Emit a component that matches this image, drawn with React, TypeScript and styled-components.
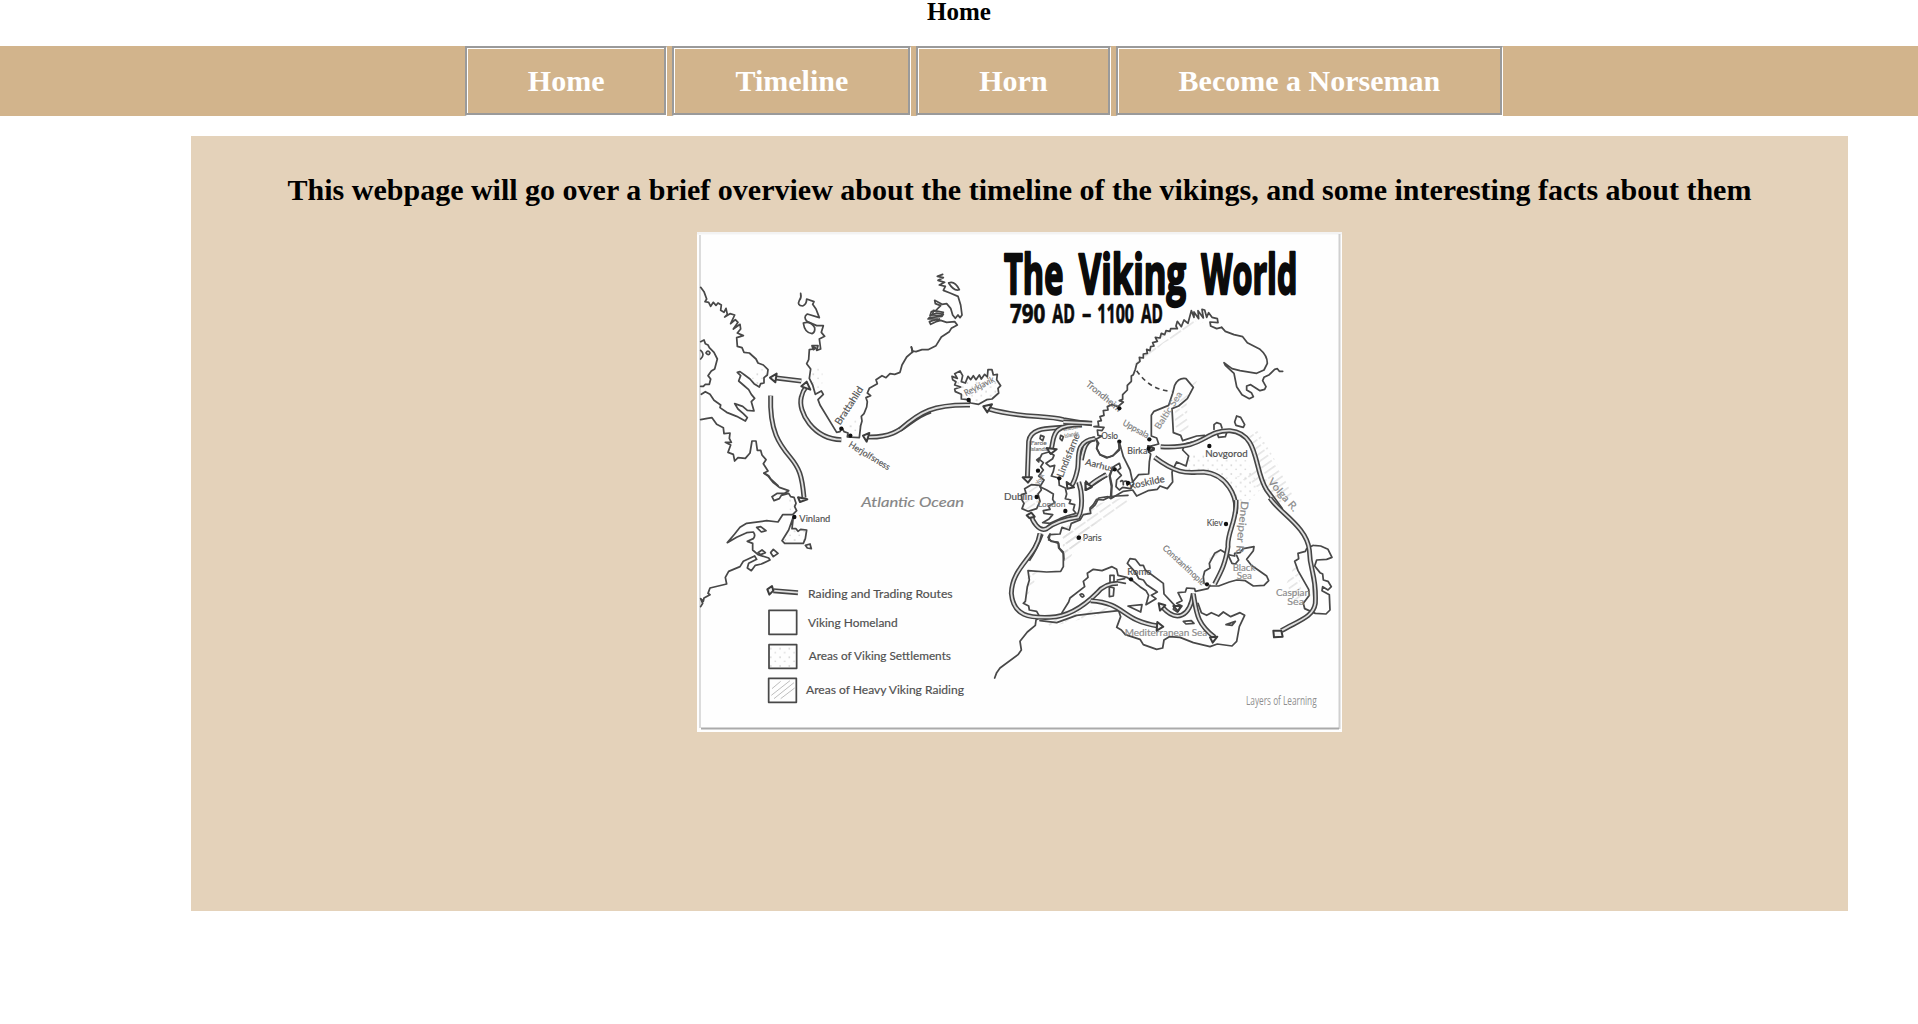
import React from 'react';
import styled, { createGlobalStyle } from 'styled-components';

const GlobalStyle = createGlobalStyle`
  body {
    margin: 0;
    background: #fff;
    font-family: "Liberation Serif", "Times New Roman", serif;
  }
`;

const Page = styled.div`
  display: flex;
  flex-direction: column;
`;

const PageTitle = styled.h1`
  margin: 0;
  height: 46px;
  box-sizing: border-box;
  font-size: 25px;
  line-height: 24px;
  text-align: center;
  color: #000;
`;

const NavBar = styled.nav`
  display: flex;
  justify-content: center;
  gap: 5px;
  padding-left: 50px;
  background: #d2b48c;
`;

const NavLink = styled.a`
  padding: 16px 62px 17px 61px;
  border-style: solid;
  border-width: 2px 1px 1px 2px;
  border-color: #9a9a9a #fff #fff #9a9a9a;
  box-shadow: inset -2px -2px 0 #9a9a9a, inset 1px 1px 0 #fff;
  color: #fff;
  font-size: 30px;
  font-weight: bold;
  line-height: 34px;
  text-decoration: none;
  white-space: nowrap;
`;

const Panel = styled.main`
  display: flex;
  flex-direction: column;
  align-items: center;
  box-sizing: border-box;
  width: 1657px;
  height: 775px;
  margin: 20px 0 0 191px;
  padding-top: 37px;
  background: #e4d2ba;
`;

const Intro = styled.h2`
  margin: 0 0 25px;
  font-size: 30px;
  line-height: 34px;
  color: #000;
  white-space: nowrap;
`;

const MapImage = styled.svg`
  display: block;
  width: 645px;
  height: 500px;
  background: #fefefe;
`;

const Coast = styled.path<{ $width?: number }>`
  fill: none;
  stroke: #484848;
  stroke-width: ${(p) => p.$width ?? 5.2};
  stroke-linejoin: round;
  stroke-linecap: round;
`;

const RouteEdge = styled.path`
  fill: none;
  stroke: #454545;
  stroke-width: 15;
`;

const RouteCore = styled.path`
  fill: none;
  stroke: #dedede;
  stroke-width: 5.5;
`;

const ArrowHead = styled.path`
  fill: #f4f4f4;
  stroke: #3c3c3c;
  stroke-width: 6;
  stroke-linejoin: round;
`;

const MapText = styled.text<{ $size: number; $tone?: string; $italic?: boolean }>`
  font-family: Lato, "Open Sans", sans-serif;
  font-size: ${(p) => p.$size}px;
  font-style: ${(p) => (p.$italic ? 'italic' : 'normal')};
  fill: ${(p) => p.$tone ?? '#505050'};
  stroke: ${(p) => p.$tone ?? '#505050'};
  stroke-width: 0.5;
`;

const Headline = styled.text<{ $size: number; $bold: number; $tone?: string }>`
  font-family: "Liberation Sans Narrow", "Open Sans", sans-serif;
  font-size: ${(p) => p.$size}px;
  font-weight: ${(p) => (p.$bold ? 700 : 400)};
  fill: ${(p) => p.$tone ?? '#0b0b0b'};
  stroke: ${(p) => p.$tone ?? '#0b0b0b'};
  stroke-width: ${(p) => p.$bold};
  stroke-linejoin: round;
`;

type Label = {
  text: string;
  x: number;
  y: number;
  w: number;
  size: number;
  rot?: number;
  tone?: string;
  italic?: boolean;
};

type Sheet = {
  id: string;
  origin: [number, number];
  dotted?: string[];
  hatched?: string[];
  coasts?: string[];
  routes?: string[];
  heads?: string[];
  towns?: [number, number][];
  labels?: Label[];
};

/* Each sheet is drawn at three times the size of the finished map. */
const sheets: Sheet[] = [
  {
    id: 'greenland-west',
    origin: [690, 225],
    dotted: [
      'M196 430 L234 434 L222 474 L208 486 L186 462Z',
      'M362 430 L398 430 L396 500 L376 500Z',
      'M470 590 L515 580 L508 636 L476 632Z',
    ],
    coasts: [
      'M32 187 L42 200 L50 222 L45 230 L56 232 L62 244 L70 232 L78 241 L84 234 L94 240 L92 256 L102 262 L108 250 L112 268 L104 276 L120 266 L134 270 L122 296 L136 284 L144 292 L130 312 L150 298 L152 312 L142 324 L160 332 L140 338 L142 364 L156 368 L162 382 L178 384 L198 402 L204 414 L220 420 L234 434 L232 450 L222 458 L222 474 L212 476 L208 486 L192 476 L180 462 L164 450 L150 440 L142 442 L152 452 L146 468 L160 480 L176 494 L184 508 L194 520 L184 530 L192 558 L172 556 L158 544 L134 536 L144 552 L160 566 L172 578 L166 588 L140 574 L110 562 L90 548 L92 540 L72 526 L60 508 L46 500 L34 508',
      'M32 350 L42 345 L46 356 L54 360 L58 368 L72 382 L82 402 L74 432 L64 438 L54 452 L62 462 L58 478 L46 478 L40 484 L32 484',
      'M48 384 Q54 372 60 384 Q56 394 48 384',
      'M32 376 Q46 388 32 402',
      'M32 584 L52 580 L66 578 L80 598 L100 608 L102 626 L120 624 L118 640 L124 652 L106 652 L122 660 L114 682 L130 688 L134 708 L144 698 L166 700 L180 684 L186 648 L198 648 L202 676 L212 676 L216 690 L228 704 L220 716 L234 738 L222 744 L236 752 L242 762 L264 782',
      'M332 205 Q335 218 328 226 Q320 242 338 243 Q350 238 350 222 L372 230 L368 238 L378 252 L388 278 L352 267 Q338 276 352 290 L380 302 L400 302 L394 322 L404 334 L388 342 L392 372 L380 376 L384 362 L368 362 L370 372 L358 374 L356 404 L350 416 L362 432 L358 460 L368 480 L376 508 L394 498 L400 508 L384 524 L390 540 L440 622 L450 620 L456 608 L462 620 L474 624 L472 636 L508 638 L512 602 L516 588 L514 574 L522 566 L530 546 L532 530 L528 518 L542 512 L532 504 L538 490 L562 476 L558 464 L576 452 L588 458 L600 446 L614 448 L630 442 L636 420 L650 396 L666 382',
      'M340 294 Q362 286 374 308 Q376 322 366 326 Q344 324 340 294',
      'M366 362 L378 370 L370 374 Z',
      'M664 366 L668 382',
    ],
    routes: [
      'M334 468 L252 458',
      'M454 644 C370 642 322 560 334 516 Q338 498 348 486',
      'M242 512 C238 620 270 660 300 696 C328 730 336 750 342 818',
      'M722 558 C650 580 640 640 532 636',
    ],
    heads: ['M240 458 L260 446 L256 472Z', 'M334 484 L350 470 L361 494Z', 'M519 632 L538 624 L530 650Z'],
    towns: [[454, 611], [481, 632]],
    labels: [
      { text: 'Brattahlid', x: 450, y: 602, w: 130, size: 30, rot: -57 },
      { text: 'Herjolfsness', x: 474, y: 664, w: 140, size: 27, rot: 31 },
    ],
  },
  {
    id: 'vinland',
    origin: [690, 460],
    dotted: ['M290 210 L348 208 L346 248 L278 248Z', 'M296 108 L318 122 L316 158 L300 160Z'],
    coasts: [
      'M222 40 L234 48 L250 68 L268 82 L296 92 L284 100 L262 100 L246 110 L252 122 L268 116 L274 106 L296 100 L302 110 L312 112 L318 130 L314 140 L320 152 L308 164 L278 164 L264 186 L230 182 L170 190 L150 202 L134 222 L112 248 L140 232 L170 218 L190 216 Q198 226 190 236 L172 244 L188 250 L188 270 L204 284 L236 294 L240 300 L214 312 L196 316 L184 332 L172 324 L176 310 L200 298 L194 288 L160 304 L150 320 L116 334 L106 352 L110 372 L60 384 L54 400 L60 404 L42 414 L40 424 L32 416 L38 430 L32 440',
      'M310 170 L296 210 L276 242 L284 250 L310 250 L340 250 L346 236 L350 210 L332 208 L324 214 L318 206 L306 206 Z',
      'M200 202 L212 200 L228 212 L214 216 Z',
      'M346 256 L360 252 L364 266 L352 264 Z',
      'M242 278 L250 268 L264 280 L250 290 Z',
      'M204 278 L216 270 L226 278 L212 284 Z',
    ],
    heads: ['M324 112 L352 118 L330 126Z', 'M232 388 L246 378 L250 392 L238 404Z'],
    routes: ['M324 398 L250 392'],
    towns: [[313, 171]],
    labels: [
      { text: 'Vinland', x: 328, y: 186, w: 93, size: 28 },
      { text: 'Atlantic Ocean', x: 514, y: 142, w: 308, size: 40, tone: '#858585', italic: true },
    ],
  },
  {
    id: 'iceland',
    origin: [900, 225],
    dotted: ['M170 470 L300 465 L290 515 L236 538 L190 520Z'],
    coasts: [
      'M36 378 L48 380 L66 374 L84 374 L108 362 L124 336 L148 320 L154 310 L172 300 L164 290 L140 292 L122 286 L108 290 L92 298 L88 290 L100 286 L118 282',
      'M128 148 L112 154 L130 158 L114 166 L134 172 L118 180 L136 184 L130 196 L150 204 L174 214 L182 240 L186 270 L180 278 L174 270 L166 280 L158 270 L152 250 L140 236 L126 238 L104 226 L106 236 L122 242 L106 258 L94 260 L90 272 L110 264 L130 268 L126 274 L88 278 L84 282 L112 282',
      'M146 174 Q164 166 178 194 Q162 200 146 174',
      'M100 256 L130 262 L124 272 L98 270Z',
      'M34 366 L38 378',
      'M184 520 L184 508 L166 500 L164 492 L182 486 L164 480 L168 470 L158 464 L156 454 L172 460 L164 446 L180 438 L188 452 L184 470 L196 474 L204 454 L212 464 L220 452 L228 464 L238 450 L244 462 L254 448 L262 456 L264 434 L276 434 L280 450 L292 448 L290 464 L302 482 L294 490 L296 504 L276 522 L260 524 L236 538 L212 534 L204 524 L184 522',
    ],
    routes: [
      'M0 614 C60 560 100 538 210 540',
      'M576 596 Q530 592 490 584 C440 570 360 580 268 552',
    ],
    heads: ['M250 544 L276 538 L262 562Z'],
    towns: [[206, 525]],
    labels: [{ text: 'Reykjavik', x: 198, y: 514, w: 98, size: 27, rot: -27, tone: '#777' }],
  },
  {
    id: 'scandinavia',
    origin: [1080, 290],
    hatched: [
      'M160 226 L240 136 L330 90 L370 96 L250 160 L180 226Z',
      'M286 350 L340 280 L352 270 L320 340 L326 420 L284 430Z',
      'M505 430 L530 420 L580 500 L640 620 L600 640 L550 600 L470 560 L530 540Z',
    ],
    dotted: ['M320 490 L380 490 L500 510 L540 600 L480 660 L430 580 L370 540 L300 540Z'],
    coasts: [
      'M425 112 L436 124 L462 134 L488 140 L502 158 L540 178 Q562 196 562 220 L552 240 L530 250 L480 242 L456 236 L432 218 L436 226 L462 250 L470 290 L486 314 L508 326 L520 320 L514 308 L500 300 L500 288 L512 284 L540 302 L554 298 L558 290 L548 272 L552 262 L568 254 L584 238 L592 236 L598 244 L608 244',
      'M425 112 L410 116 L392 108 L390 96 L414 98 L412 86 L396 82 L386 68 L380 82 L374 60 L366 58 L370 84 L354 62 L356 86 L342 66 L342 82 L334 62 L324 100 L312 90 L304 110 L292 94 L288 108 L292 116 L272 116 L270 124 L258 122 L254 134 L244 130 L240 144 L226 142 L232 154 L218 158 L222 168 L212 170 L210 182 L200 178 L202 190 L190 192 L190 204 L178 202 L180 214 L170 222 L166 238 L160 254 L154 258 L154 274 L142 286 L142 300 L128 314 L128 328 L118 332 L130 336 L114 350 L96 344 L82 350 L84 360 L70 362 L72 376 L60 380 L64 392 L54 394 L56 408 L42 410 L72 412 L66 422 L52 420 L54 436 L66 438 L48 448 L56 460 L50 474 L60 494 L82 502 L98 498 L118 476 L118 456 L130 500 L150 540 L158 576 L176 554 L206 552 L208 516 L212 492 L206 486 L222 480 L222 474 L206 470 L236 462 L230 444 L214 438 L214 376 L222 364 L266 346 L278 310 L284 286 Q296 262 318 266 L340 292 L322 326 L296 348 L276 356 L280 428 L302 436 L308 452 L350 438 L374 436 L380 446 L314 462 L308 480 L326 498 L318 528 L290 516 L284 528 L276 546 L278 576 L262 596 L240 588 L232 598 L204 602 L170 618 L158 600 L130 604 L92 626 L84 620 L56 624 L46 644 L30 660',
      'M470 378 L482 382 L494 404 L490 412 L468 406 L464 396Z',
      'M402 418 L402 404 L410 398 L422 402 L426 414 M412 432 L416 442 L436 440 L440 428',
      'M94 624 L96 586 L90 558 L96 540 L104 528 L118 520 L122 534 L112 542 L124 556 L110 570 L108 590 L118 600 L128 592 L152 596 L160 582',
      'M122 574 Q130 566 130 584 M134 574 Q144 570 142 586',
    ],
    routes: [
      'M242 470 C380 478 370 420 450 422 C540 430 520 540 560 600 L604 660',
      'M224 502 C300 560 330 546 370 546 C440 552 474 620 466 670',
      'M46 446 C16 448 10 480 4 510',
      'M78 554 L28 588',
    ],
    heads: ['M18 574 L16 600 L34 592Z', 'M204 468 L222 476 L206 486Z'],
    towns: [[118, 355], [118, 455], [208, 448], [206, 476], [388, 468], [104, 538], [144, 579]],
    labels: [
      { text: 'Trondheim', x: 16, y: 286, w: 128, size: 27, rot: 39, tone: '#777' },
      { text: 'Uppsala', x: 126, y: 404, w: 86, size: 26, rot: 29, tone: '#777' },
      { text: 'Oslo', x: 64, y: 446, w: 50, size: 27 },
      { text: 'Birka', x: 142, y: 493, w: 60, size: 27 },
      { text: 'Aarhus', x: 14, y: 524, w: 88, size: 27, rot: 14 },
      { text: 'Roskilde', x: 150, y: 598, w: 108, size: 29, rot: -12 },
      { text: 'Baltic Sea', x: 238, y: 420, w: 128, size: 27, rot: -57, tone: '#8c8c8c' },
      { text: 'Novgorod', x: 376, y: 500, w: 127, size: 27 },
    ],
  },
  {
    id: 'british-isles',
    origin: [1000, 370],
    hatched: ['M190 470 L240 440 L300 400 L380 380 L390 400 L300 460 L190 560Z', 'M66 370 L115 346 L115 410 L70 420Z'],
    coasts: [
      'M118 268 L126 252 L146 246 L162 256 L158 266 L138 280 L150 290 L164 286 L160 304 L154 318 L176 324 L178 346 L196 354 L200 372 L196 386 L212 390 L208 400 L224 404 L220 420 L228 430 L200 438 L180 446 L150 460 L128 458 L148 446 L158 434 L132 430 L130 422 L150 418 L146 408 L164 398 L158 388 L160 372 L140 360 L120 350 L132 330 L116 318 L130 300 L122 290 L130 278 L118 268',
      'M64 374 L78 370 L74 356 L94 344 L120 346 L124 360 L114 372 L120 394 L110 416 L84 424 L66 416 L72 400 L66 390Z',
      'M122 196 L132 200 L128 212 L120 206Z M182 196 L190 200 L186 212 L180 206Z M110 270 L118 264 L116 276Z',
      'M384 376 L350 378 L330 380 L310 390 L290 388 L280 404 L270 414 L272 430 L250 434 L240 450 L214 460 L208 480 L186 472 L180 492 L150 494 L146 510 L176 520 L178 534 L190 546 L192 570',
      'M288 206 L292 220 L290 236 L300 254 L320 264 L340 256 L358 240 L356 220',
      'M340 290 L328 316 L334 350 L332 380',
    ],
    routes: [
      'M188 172 C150 176 92 170 86 214 L82 326',
      'M246 164 C150 164 164 200 154 236',
      'M284 206 C220 214 240 270 232 300 Q226 330 214 348',
      'M236 336 C248 370 248 420 234 442 C190 448 160 460 140 476 C116 488 96 450 94 436',
      'M320 314 Q284 332 266 350',
      'M124 492 Q110 530 84 570',
      'M276 160 L190 156',
    ],
    heads: ['M68 322 L96 322 L84 338Z', 'M140 234 L170 238 L152 252Z', 'M200 336 L222 352 L202 356Z', 'M256 338 L276 350 L258 360Z', 'M80 436 L94 428 L104 440 L88 444Z'],
    towns: [[114, 302], [110, 381], [178, 325], [196, 423], [237, 503]],
    labels: [
      { text: 'Dublin', x: 12, y: 390, w: 86, size: 28 },
      { text: 'London', x: 114, y: 412, w: 82, size: 25, tone: '#777' },
      { text: 'Paris', x: 248, y: 512, w: 57, size: 28 },
      { text: 'Lindisfarne', x: 188, y: 324, w: 138, size: 29, rot: -68 },
      { text: 'York', x: 118, y: 346, w: 34, size: 19, rot: -64, tone: '#888' },
      { text: 'Faroe', x: 92, y: 224, w: 48, size: 18, tone: '#777' },
      { text: 'Islands', x: 90, y: 243, w: 52, size: 18, tone: '#777' },
      { text: 'Shetland', x: 190, y: 184, w: 58, size: 17, rot: -12, tone: '#888' },
      { text: 'Islands', x: 194, y: 204, w: 44, size: 17, rot: -12, tone: '#888' },
    ],
  },
  {
    id: 'mediterranean',
    origin: [980, 500],
    hatched: [
      'M244 100 L300 90 L370 60 L290 140 L256 200Z',
      'M144 215 L180 212 L136 300Z',
      'M180 350 L400 320 L410 332 L210 380Z',
      'M920 250 L950 180 L960 250 L980 330 L940 300Z',
      'M690 160 L720 150 L680 220Z',
    ],
    coasts: [
      'M210 102 L204 112 L214 124 L234 126 L236 144 L250 160 L250 200 L242 214 L200 216 L144 212 L148 240 L142 260 L136 304 L130 310 L146 318 L148 330 L170 334 L180 352 L168 360 L166 376 L142 396 L120 424 L124 450 L114 464 L60 504 L50 518 L44 534',
      'M246 338 L266 306 L270 294 L314 260 L310 244 L324 232 L322 220 L340 208 L366 212 L396 200 L410 208 L414 226 L440 232 L460 244 L480 260 L498 272 L506 286 L498 314 L528 296 L514 286 L532 276 L500 254 L490 240 L476 236 L466 216 L442 190 L450 176 L466 178 L480 196 L490 196 L496 210 L550 250 L552 282 L584 316 L580 328 L592 336 L606 318 L590 310 L606 302 L594 278 L616 276 L620 264 L644 266 L646 274 L684 266 L690 256',
      'M180 362 L230 368 L290 346 L340 340 L416 332 L422 350 L410 382 L424 390 L436 404 L480 418 L490 434 L530 448 L548 444 L552 420 L568 410 L600 412 L640 428 L690 440 L712 432 L756 438 L770 424 L778 380 L794 346 L780 338 L752 350 L730 336 L716 348 L694 338 L680 346 L664 338 L654 310',
      'M672 250 L670 230 L674 214 L690 204 L688 190 L704 160 L722 150 L732 156 L744 164 L764 168 L764 160 L780 158 L790 146 L822 140 L820 152 L800 178 L814 196 L860 228 L866 242 L852 256 L820 258 L796 242 L770 240 L748 246 L716 258 L690 258',
      'M744 164 L756 190 L766 192 L776 180 L770 166',
      'M1000 136 L1022 138 L1044 148 L1056 172 L1040 178 L1010 180 L1004 198 L1020 218 L1028 222 L1030 240 L1044 244 L1054 260 L1044 270 L1028 260 L1026 272 L1048 284 L1050 330 L1038 342 L1006 340 L974 326 L970 310 L988 286 L986 268 L954 212 L944 184 L956 176 L954 160 L976 154 L980 146 L1000 136',
      'M444 318 L486 314 L482 336Z M390 226 L402 226 L402 250 L390 248Z M388 260 L402 264 L400 288 L388 290Z M610 364 L634 362 L642 370 L618 372Z M738 374 L766 364 L756 376Z M300 284 Q308 278 312 288 Q306 296 300 284',
      'M412 240 L434 236 M414 246 L436 250',
    ],
    routes: [
      'M180 100 C170 170 96 200 94 280 C100 350 150 354 210 352 C270 350 320 310 350 280 Q374 250 414 250',
      'M332 302 C440 310 420 360 534 378',
      'M640 280 C630 350 590 370 546 320',
      'M640 282 C650 340 650 370 704 412',
      'M768 0 C772 60 740 100 744 140 C736 190 726 210 704 252',
      'M870 -6 C900 40 980 80 988 150 C990 220 1010 220 1006 310 C1000 350 960 360 904 392',
    ],
    heads: [
      'M532 366 L550 380 L530 392Z',
      'M536 310 L556 316 L540 332Z',
      'M690 412 L712 410 L698 428Z',
      'M880 392 L904 392 L908 410 L882 412Z',
      'M580 318 L602 318 L594 334Z',
    ],
    towns: [[296, 113], [738, 72], [453, 238], [681, 253]],
    labels: [
      { text: 'Kiev', x: 680, y: 77, w: 48, size: 27 },
      { text: 'Rome', x: 442, y: 226, w: 72, size: 27 },
      { text: 'Constantinople', x: 546, y: 146, w: 164, size: 26, rot: 43, tone: '#777' },
      { text: 'Dneiper R.', x: 784, y: 2, w: 164, size: 31, rot: 96, tone: '#888' },
      { text: 'Volga R.', x: 862, y: -54, w: 120, size: 31, rot: 49, tone: '#888' },
      { text: 'Black', x: 758, y: 212, w: 68, size: 27, tone: '#8c8c8c' },
      { text: 'Sea', x: 770, y: 238, w: 46, size: 27, tone: '#8c8c8c' },
      { text: 'Caspian', x: 888, y: 289, w: 102, size: 28, tone: '#8c8c8c' },
      { text: 'Sea', x: 922, y: 314, w: 50, size: 28, tone: '#8c8c8c' },
      { text: 'Mediterranean Sea', x: 434, y: 407, w: 248, size: 27, tone: '#8c8c8c' },
    ],
  },
  {
    id: 'legend',
    origin: [750, 560],
    labels: [
      { text: 'Raiding and Trading Routes', x: 174, y: 114, w: 434, size: 34 },
      { text: 'Viking Homeland', x: 174, y: 200, w: 269, size: 34 },
      { text: 'Areas of Viking Settlements', x: 176, y: 301, w: 427, size: 34 },
      { text: 'Areas of Heavy Viking Raiding', x: 168, y: 403, w: 474, size: 34 },
    ],
  },
];

const navItems = ['Home', 'Timeline', 'Horn', 'Become a Norseman'];

const titleWords = [
  { text: 'The', x: 132, w: 178 },
  { text: 'Viking', x: 356, w: 322 },
  { text: 'World', x: 724, w: 288 },
];

const dateWords = [
  { text: '790', x: 150, w: 106 },
  { text: 'AD', x: 277, w: 68 },
  { text: '–', x: 366, w: 28 },
  { text: '1100', x: 412, w: 110 },
  { text: 'AD', x: 543, w: 66 },
];

function SheetDrawing({ sheet }: { sheet: Sheet }) {
  const [x, y] = sheet.origin;
  return (
    <g transform={`translate(${x} ${y}) scale(0.33333)`}>
      {sheet.dotted?.map((d) => <path key={d} d={d} fill="url(#dots)" />)}
      {sheet.hatched?.map((d) => <path key={d} d={d} fill="url(#hatch)" />)}
      {sheet.coasts?.map((d) => <Coast key={d} d={d} />)}
      {sheet.labels?.map((l) => (
        <MapText
          key={`${l.text}${l.y}`}
          x={l.x}
          y={l.y}
          textLength={l.w}
          lengthAdjust="spacingAndGlyphs"
          transform={l.rot ? `rotate(${l.rot} ${l.x} ${l.y})` : undefined}
          $size={l.size}
          $tone={l.tone}
          $italic={l.italic}
        >
          {l.text}
        </MapText>
      ))}
      {sheet.routes?.map((d) => (
        <g key={d}>
          <RouteEdge d={d} />
          <RouteCore d={d} />
        </g>
      ))}
      {sheet.heads?.map((d) => <ArrowHead key={d} d={d} />)}
      {sheet.towns?.map(([cx, cy]) => <circle key={`${cx}-${cy}`} cx={cx} cy={cy} r="6.5" fill="#111" />)}
    </g>
  );
}

function VikingMap() {
  return (
    <MapImage viewBox="697 232 645 500" role="img" aria-label="The Viking World">
      <defs>
        <pattern id="dots" width="28" height="26" patternUnits="userSpaceOnUse">
          <circle cx="6" cy="6" r="2.4" fill="#c4c4c4" />
          <circle cx="20" cy="18" r="2.4" fill="#cfcfcf" />
        </pattern>
        <pattern id="hatch" width="46" height="19" patternUnits="userSpaceOnUse" patternTransform="rotate(-35)">
          <path d="M0 8 H40" stroke="#dadada" strokeWidth="3.5" />
        </pattern>
      </defs>
      <path d="M697 233 H1342" stroke="#f3f3f3" strokeWidth="3" />
      <path d="M700 235 V728" stroke="#dcdcdc" strokeWidth="2" />
      <path d="M1339.5 234 V729" stroke="#d0d0d0" strokeWidth="2" />
      <path d="M701 728.5 H1339" stroke="#aaa" strokeWidth="2" />
      {sheets.map((s) => <SheetDrawing key={s.id} sheet={s} />)}
      <g transform="translate(960 225) scale(0.33333)">
        {titleWords.map((w) => (
          <Headline key={w.x} x={w.x} y="206" textLength={w.w} lengthAdjust="spacingAndGlyphs" $size={164} $bold={7}>
            {w.text}
          </Headline>
        ))}
        {dateWords.map((w) => (
          <Headline key={w.x} x={w.x} y="295" textLength={w.w} lengthAdjust="spacingAndGlyphs" $size={78} $bold={2}>
            {w.text}
          </Headline>
        ))}
      </g>
      <g transform="translate(1080 290) scale(0.33333)">
        <path d="M170 242 Q210 300 274 304" fill="none" stroke="#444" strokeWidth="5" strokeDasharray="14 11" />
      </g>
      <g transform="translate(750 560) scale(0.33333)">
        <Coast d="M57 151 H140 V223 H57Z" />
        <path d="M57 254 H140 V325 H57Z" fill="url(#dots)" />
        <Coast d="M57 254 H140 V325 H57Z" />
        <path d="M66 386 L92 364 M64 406 L120 362 M72 416 L132 368 M92 416 L134 384" stroke="#bdbdbd" strokeWidth="3" />
        <Coast d="M56 355 H139 V427 H56Z" />
      </g>
      <g transform="translate(980 500) scale(0.33333)">
        <Headline x="798" y="616" textLength={212} lengthAdjust="spacingAndGlyphs" $size={36} $bold={0} $tone="#8f8f8f">
          Layers of Learning
        </Headline>
      </g>
    </MapImage>
  );
}

export default function App() {
  return (
    <Page>
      <GlobalStyle />
      <PageTitle>Home</PageTitle>
      <NavBar>
        {navItems.map((item) => (
          <NavLink key={item}>{item}</NavLink>
        ))}
      </NavBar>
      <Panel>
        <Intro>This webpage will go over a brief overview about the timeline of the vikings, and some interesting facts about them</Intro>
        <VikingMap />
      </Panel>
    </Page>
  );
}
